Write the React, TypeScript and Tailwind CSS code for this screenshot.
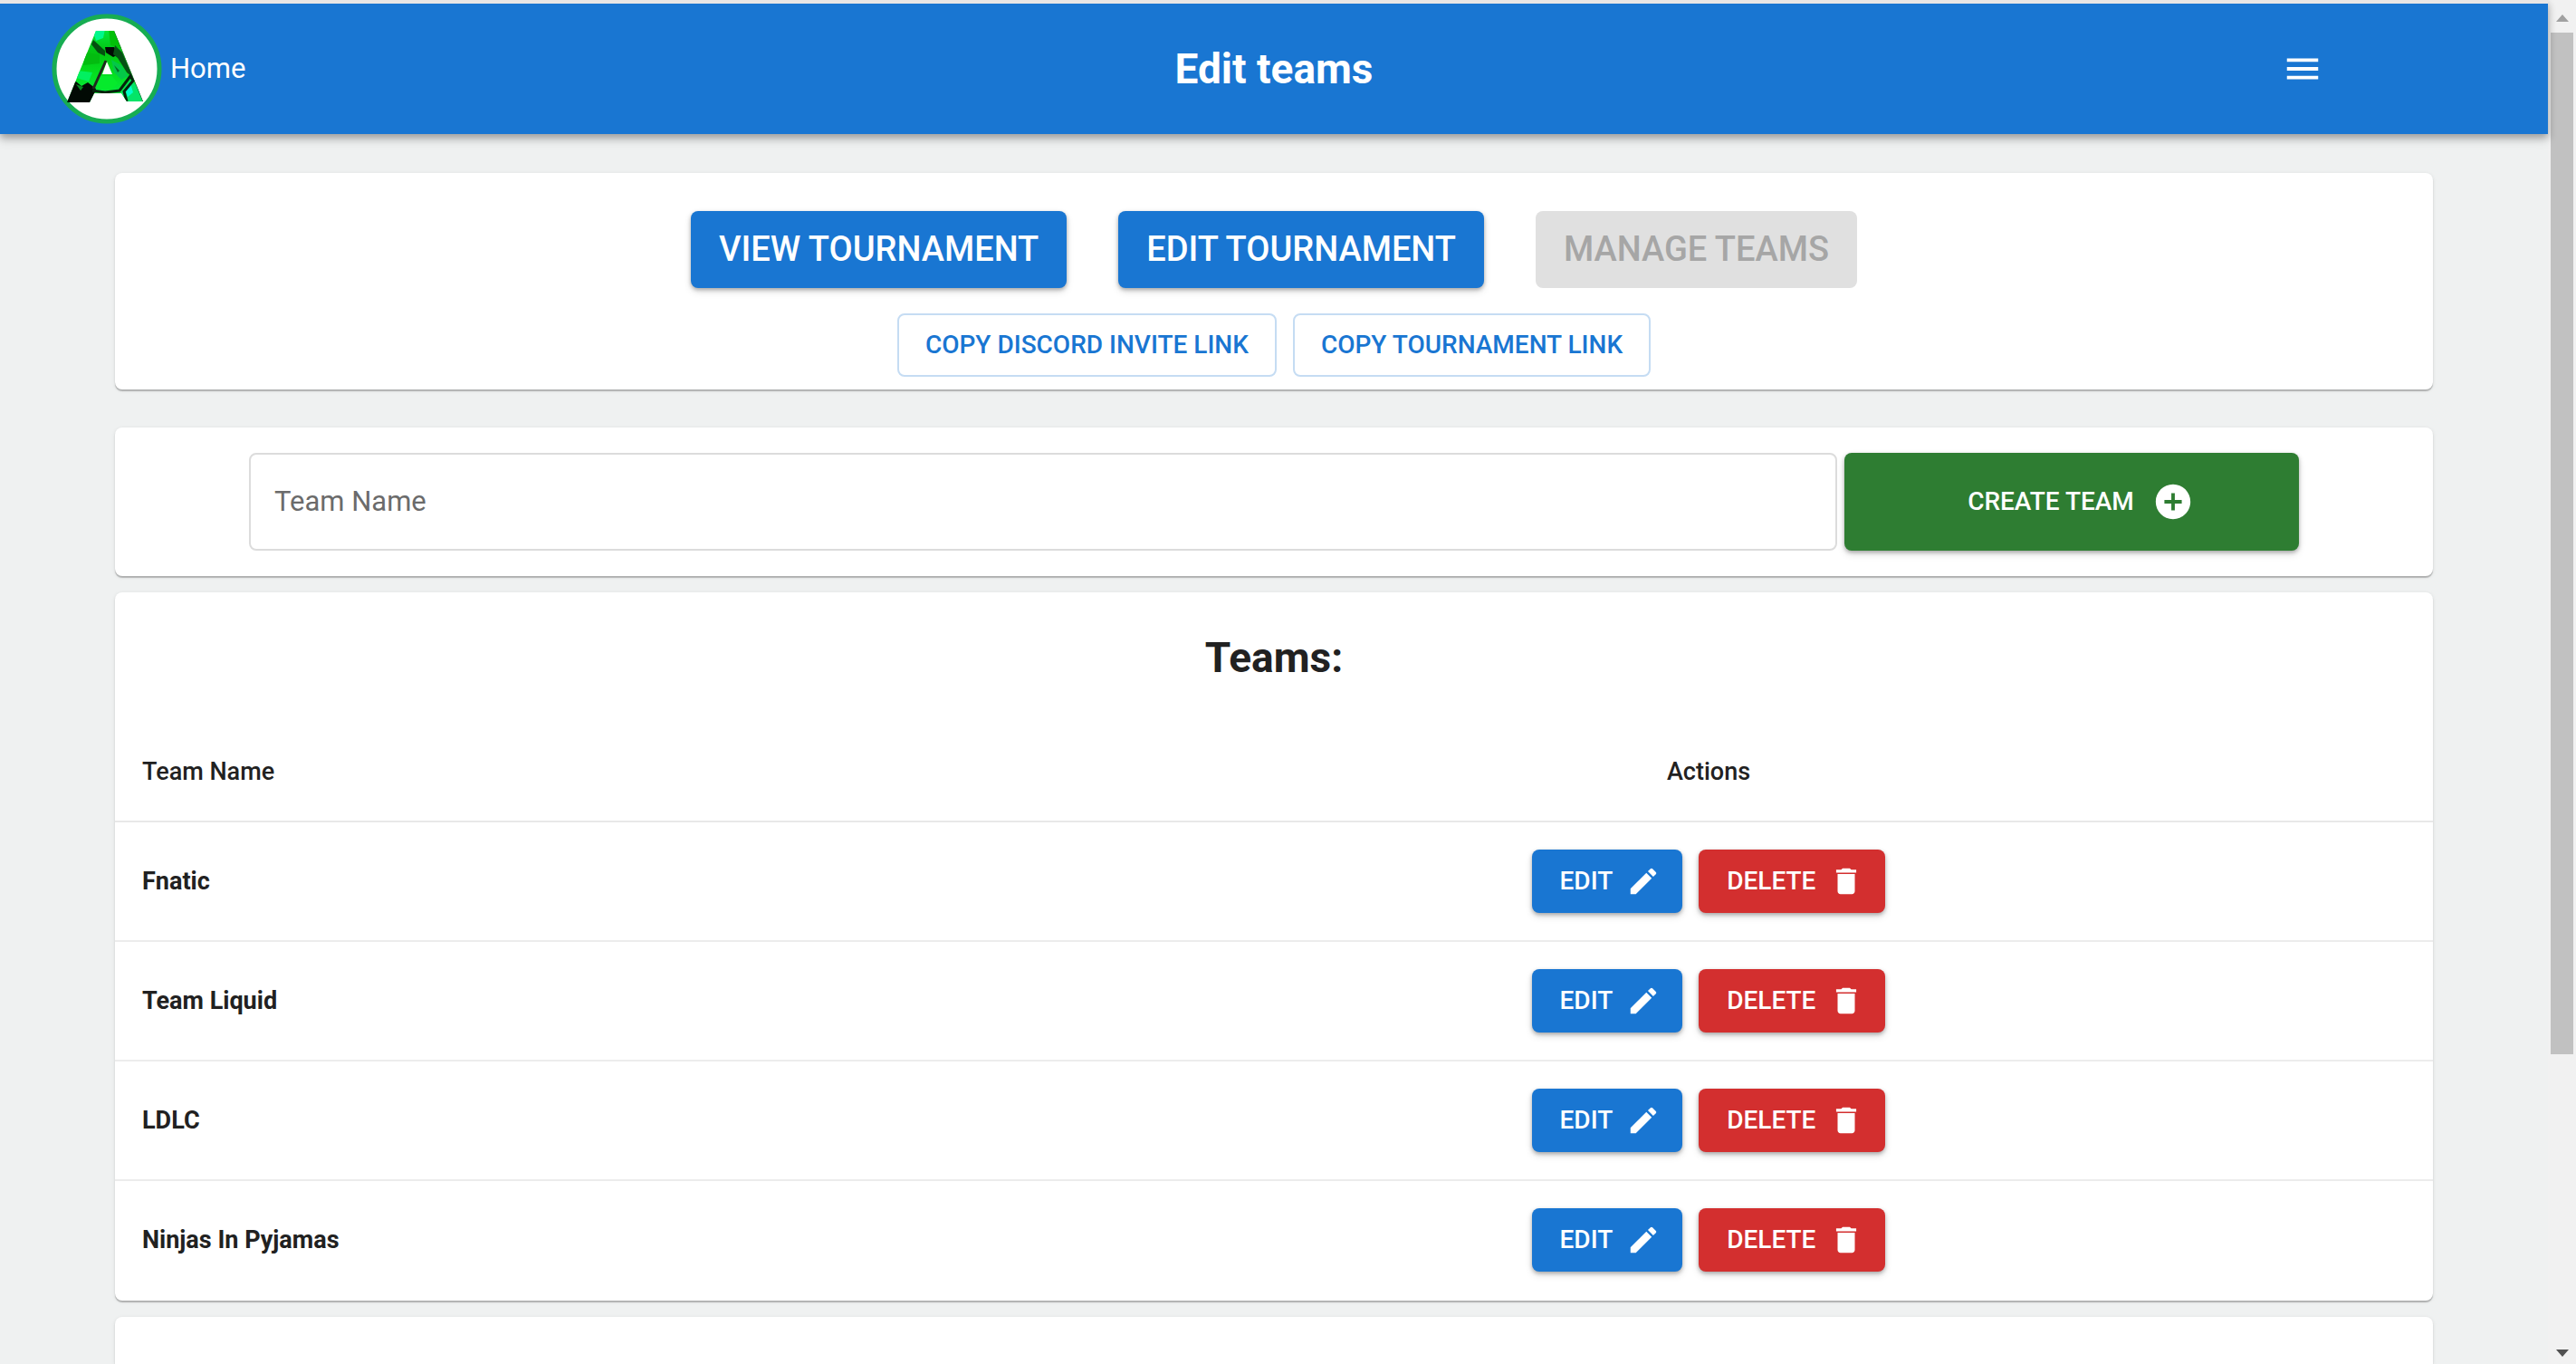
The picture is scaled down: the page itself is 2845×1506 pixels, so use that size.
import type { ButtonHTMLAttributes, ReactNode } from "react";
import clsx from "clsx";
import { MdAddCircle, MdDelete, MdEdit, MdMenu } from "react-icons/md";

const teams = ["Fnatic", "Team Liquid", "LDLC", "Ninjas In Pyjamas"];

const raised =
  "shadow-[0_2px_4px_rgba(0,0,0,0.28),0_4px_8px_rgba(0,0,0,0.12)]";

function Logo() {
  return (
    <svg viewBox="0 0 124 124" className="size-31" role="img" aria-label="Logo">
      <defs>
        <clipPath id="letter">
          <path
            clipRule="evenodd"
            d="M50 20H70L102 98H84L78 89H48L43 99H18ZM62 54L57 68H68Z"
          />
        </clipPath>
        <linearGradient id="leaf" x1="0" y1="0" x2="0" y2="1">
          <stop offset="0" stopColor="#04e83c" />
          <stop offset="0.3" stopColor="#03c412" />
          <stop offset="0.6" stopColor="#05e020" />
          <stop offset="1" stopColor="#04f050" />
        </linearGradient>
      </defs>
      <circle cx="62" cy="62" r="58" fill="#fff" stroke="#17ad52" strokeWidth="5" />
      <g clipPath="url(#letter)">
        <rect x="15" y="18" width="90" height="84" fill="url(#leaf)" />
        <path d="M46 18H60L58 28L50 31Z" fill="#00f78c" />
        <path d="M64 18H72L80 40L66 36Z" fill="#02c008" />
        <path d="M47 30L60 42L60 48L52 44L45 35Z" fill="#04500f" />
        <path d="M38 44L54 46L54 56L36 58Z" fill="#03bc10" />
        <path d="M30 64L46 66L42 76L28 72Z" fill="#02f060" />
        <path d="M60 38L70 38L75 46L69 49L61 44Z" fill="#020a04" />
        <path d="M71 36L79 44L91 72L84 66L74 50L69 46Z" fill="#065014" />
        <path d="M67 52L78 58L86 70L78 74L70 66Z" fill="#04c848" />
        <path d="M70 58L76 64L74 66Z" fill="#056a24" />
        <path d="M52 70H68L74 78L66 86L50 84Z" fill="#06ea2c" />
        <path d="M15 84L28 76L34 81L41 77L50 84L44 102H15Z" fill="#020a04" />
        <path d="M28 79L36 82L33 86Z" fill="#068a20" />
        <path d="M88 74L96 82L102 99H84L78 88Z" fill="#04e468" />
        <path d="M82 84L88 78L91 88L85 93Z" fill="#00ffc8" />
        <path d="M46 86L60 88L76 86L88 70L91 75L81 87L84 98" fill="none" stroke="#04240c" strokeWidth="3" />
        <path d="M71 20L103 99" stroke="#2c3a30" strokeWidth="2" />
        <path d="M61 53L47 84" stroke="#20281e" strokeWidth="3" />
      </g>
    </svg>
  );
}

function Card({ className, children }: { className?: string; children?: ReactNode }) {
  return (
    <section
      className={clsx(
        "rounded-lg bg-white shadow-[0_2px_1px_rgba(0,0,0,0.22),0_1px_4px_rgba(0,0,0,0.10)]",
        className,
      )}
    >
      {children}
    </section>
  );
}

function ActionButton({ className, ...rest }: ButtonHTMLAttributes<HTMLButtonElement>) {
  return (
    <button
      type="button"
      className={clsx(
        "flex items-center rounded-lg font-medium uppercase",
        className,
      )}
      {...rest}
    />
  );
}

function Scrollbar() {
  return (
    <div aria-hidden="true" className="flex w-[31px] shrink-0 flex-col items-center bg-[#f1f1f1]">
      <svg viewBox="0 0 14 8" className="mt-4 mb-3 h-2 w-3.5 shrink-0" fill="#a0a0a0">
        <path d="M0 8L7 0L14 8Z" />
      </svg>
      <div className="flex w-full grow flex-col px-[3px]">
        <div className="h-[78%] bg-[#c1c1c1]" />
      </div>
      <svg viewBox="0 0 14 8" className="my-2 h-2 w-3.5 shrink-0" fill="#505050">
        <path d="M0 0L7 8L14 0Z" />
      </svg>
    </div>
  );
}

export default function App() {
  return (
    <div className="flex h-screen overflow-hidden bg-[#eff1f1] font-[Roboto,sans-serif] text-[#212121]">
      <div className="flex min-w-0 grow flex-col">
        <header className="z-10 grid grid-cols-[1fr_auto_1fr] items-center border-t-4 border-[#e9e6e5] bg-[#1976d2] py-2.5 text-white shadow-[0_4px_8px_rgba(0,0,0,0.3),0_8px_12px_rgba(0,0,0,0.08)]">
          <a href="#" className="ml-14 flex items-center gap-2 justify-self-start text-[31px] leading-[46px]">
            <Logo />
            Home
          </a>
          <h1 className="text-[46px] leading-[62px] font-bold">Edit teams</h1>
          <button type="button" aria-label="Menu" className="mr-62 justify-self-end">
            <MdMenu className="size-[46px]" />
          </button>
        </header>

        <main className="flex grow flex-col px-[127px] pt-[43px]">
          <Card className="mb-[42px] flex flex-col items-center gap-7 pt-[42px] pb-[14px]">
            <nav className="flex gap-[57px]">
              <ActionButton className={clsx("bg-[#1976d2] px-[31px] py-[11px] text-[38px] leading-[63px] text-white", raised)}>
                View tournament
              </ActionButton>
              <ActionButton className={clsx("bg-[#1976d2] px-[31px] py-[11px] text-[38px] leading-[63px] text-white", raised)}>
                Edit tournament
              </ActionButton>
              <ActionButton disabled className="bg-[#e0e0e0] px-[31px] py-[11px] text-[38px] leading-[63px] text-[#a6a6a6]">
                Manage teams
              </ActionButton>
            </nav>
            <div className="flex gap-[18px]">
              <ActionButton className="border-2 border-[#c5dcf3] px-[29px] py-2.5 text-[28px] leading-[46px] text-[#1976d2]">
                Copy discord invite link
              </ActionButton>
              <ActionButton className="border-2 border-[#c5dcf3] px-[29px] py-2.5 text-[28px] leading-[46px] text-[#1976d2]">
                Copy tournament link
              </ActionButton>
            </div>
          </Card>

          <Card className="mb-[18px] px-[148px] py-7">
            <form className="flex gap-2">
              <input
                type="text"
                aria-label="Team Name"
                placeholder="Team Name"
                className="min-w-0 grow rounded-lg border-2 border-[#dcdcdc] px-[26px] py-[29px] text-[31px] leading-[46px] placeholder:text-[#6b6b6b]"
              />
              <ActionButton className={clsx("w-[502px] justify-center gap-5 bg-[#2e7d32] pl-5 text-[28px] leading-[46px] text-white", raised)}>
                Create team
                <MdAddCircle className="size-[46px]" />
              </ActionButton>
            </form>
          </Card>

          <Card className="mb-[18px]">
            <h2 className="py-10 text-center text-[46px] leading-[64px] font-bold">Teams:</h2>
            <table className="w-full table-fixed text-[27px] leading-[46px]">
              <thead>
                <tr className="border-b-2 border-[#e8e8e8]">
                  <th scope="col" className="w-3/8 px-[30px] py-[31px] text-left font-medium">Team Name</th>
                  <th scope="col" className="px-[30px] py-[31px] text-center font-medium">Actions</th>
                </tr>
              </thead>
              <tbody>
                {teams.map((team) => (
                  <tr key={team} className="border-b-2 border-[#ececec] last:border-transparent">
                    <th scope="row" className="px-[30px] text-left font-bold">{team}</th>
                    <td className="px-[30px] py-[30px]">
                      <div className="flex justify-center gap-[18px]">
                        <ActionButton className={clsx("gap-[15px] bg-[#1976d2] py-3 pr-6 pl-[31px] text-[28px] leading-[46px] text-white", raised)}>
                          Edit
                          <MdEdit className="size-[38px]" />
                        </ActionButton>
                        <ActionButton className={clsx("gap-[15px] bg-[#d32f2f] py-3 pr-6 pl-[31px] text-[28px] leading-[46px] text-white", raised)}>
                          Delete
                          <MdDelete className="size-[38px]" />
                        </ActionButton>
                      </div>
                    </td>
                  </tr>
                ))}
              </tbody>
            </table>
          </Card>

          <Card className="grow rounded-b-none" />
        </main>
      </div>
      <Scrollbar />
    </div>
  );
}
